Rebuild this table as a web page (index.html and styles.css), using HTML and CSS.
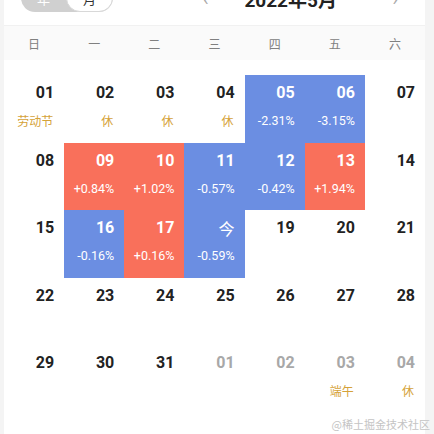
FILE: index.html
```html
<!DOCTYPE html>
<html lang="zh">
<head>
<meta charset="utf-8">
<link rel="stylesheet" href="styles.css">
</head>
<body>
<div class="page">
  <div class="card">
    <div class="toolbar">
      <div class="toggle">
        <span class="tg tg-year">年</span>
        <span class="tg tg-month">月</span>
      </div>
      <div class="nav">
        <span class="arrow">&lsaquo;</span>
        <span class="title">2022年5月</span>
        <span class="arrow">&rsaquo;</span>
      </div>
    </div>
    <div class="weekdays">
      <span>日</span><span>一</span><span>二</span><span>三</span><span>四</span><span>五</span><span>六</span>
    </div>
    <div class="grid">
      <div class="cell"><span class="num">01</span><span class="sub hol">劳动节</span></div>
      <div class="cell"><span class="num">02</span><span class="sub hol">休</span></div>
      <div class="cell"><span class="num">03</span><span class="sub hol">休</span></div>
      <div class="cell"><span class="num">04</span><span class="sub hol">休</span></div>
      <div class="cell down"><span class="num">05</span><span class="sub">-2.31%</span></div>
      <div class="cell down"><span class="num">06</span><span class="sub">-3.15%</span></div>
      <div class="cell"><span class="num">07</span></div>

      <div class="cell"><span class="num">08</span></div>
      <div class="cell up"><span class="num">09</span><span class="sub">+0.84%</span></div>
      <div class="cell up"><span class="num">10</span><span class="sub">+1.02%</span></div>
      <div class="cell down"><span class="num">11</span><span class="sub">-0.57%</span></div>
      <div class="cell down"><span class="num">12</span><span class="sub">-0.42%</span></div>
      <div class="cell up"><span class="num">13</span><span class="sub">+1.94%</span></div>
      <div class="cell"><span class="num">14</span></div>

      <div class="cell"><span class="num">15</span></div>
      <div class="cell down"><span class="num">16</span><span class="sub">-0.16%</span></div>
      <div class="cell up"><span class="num">17</span><span class="sub">+0.16%</span></div>
      <div class="cell down"><span class="num today">今</span><span class="sub">-0.59%</span></div>
      <div class="cell"><span class="num">19</span></div>
      <div class="cell"><span class="num">20</span></div>
      <div class="cell"><span class="num">21</span></div>

      <div class="cell"><span class="num">22</span></div>
      <div class="cell"><span class="num">23</span></div>
      <div class="cell"><span class="num">24</span></div>
      <div class="cell"><span class="num">25</span></div>
      <div class="cell"><span class="num">26</span></div>
      <div class="cell"><span class="num">27</span></div>
      <div class="cell"><span class="num">28</span></div>

      <div class="cell"><span class="num">29</span></div>
      <div class="cell"><span class="num">30</span></div>
      <div class="cell"><span class="num">31</span></div>
      <div class="cell other"><span class="num">01</span></div>
      <div class="cell other"><span class="num">02</span></div>
      <div class="cell other"><span class="num">03</span><span class="sub hol">端午</span></div>
      <div class="cell other"><span class="num">04</span><span class="sub hol">休</span></div>
    </div>
  </div>
  <div class="watermark">@稀土掘金技术社区</div>
</div>
</body>
</html>
```

FILE: styles.css
```css
html, body {
  margin: 0;
  padding: 0;
  background: #f4f4f4;
  overflow: hidden;
}

.page {
  position: relative;
  width: 434px;
  height: 434px;
  padding: 0 9px 0 4px;
  box-sizing: border-box;
  font-family: Roboto, "Noto Sans CJK SC", sans-serif;
  overflow: hidden;
}

.card {
  display: flow-root;
  background: #ffffff;
  height: 100%;
}

.toolbar {
  display: flex;
  align-items: center;
  height: 54px;
  margin-top: -29px;
  padding-left: 17px;
}

.toggle {
  display: flex;
  height: 28px;
  width: 92px;
  border-radius: 14px;
  background: #d0d0d0;
}

.tg {
  flex: 1;
  display: flex;
  align-items: center;
  justify-content: center;
  font-family: "Noto Sans CJK SC", sans-serif;
  font-size: 13px;
}

.tg-year {
  color: #ffffff;
}

.tg-month {
  background: #ffffff;
  border: 1px solid #d8d8d8;
  border-radius: 14px;
  color: #333333;
}

.nav {
  display: flex;
  align-items: center;
  margin-left: 90px;
  gap: 36px;
}

.arrow {
  color: #aaaaaa;
  font-size: 18px;
}

.title {
  font-family: Roboto, "Noto Sans CJK SC", sans-serif;
  font-weight: 700;
  font-size: 19px;
  color: #222222;
  width: 112px;
}

.weekdays {
  display: grid;
  grid-template-columns: repeat(7, 1fr);
  height: 34px;
  align-items: center;
  background: #fafafa;
  border-top: 1px solid #f1f1f1;
  font-family: "Noto Sans CJK SC", sans-serif;
  font-size: 12px;
  color: #808080;
  text-align: center;
}

.grid {
  display: grid;
  grid-template-columns: repeat(7, 1fr);
  grid-auto-rows: 67.6px;
  padding-top: 15px;
}

.cell {
  display: flex;
  flex-direction: column;
  align-items: flex-end;
  padding: 8px 10px 0 0;
}

.num {
  font-size: 16px;
  line-height: 20px;
  font-weight: 700;
  color: #222222;
}

.today {
  font-family: "Noto Sans CJK SC", sans-serif;
  font-weight: 400;
}

.sub {
  margin-top: 10px;
  font-size: 12.5px;
  line-height: 16px;
  color: #ffffff;
}

.hol {
  font-family: "Noto Sans CJK SC", sans-serif;
  font-size: 12px;
  color: #d5a238;
  margin-right: 1px;
}

.down {
  background: #6b8ee2;
}

.up {
  background: #f9705b;
}

.down .num,
.up .num {
  color: #ffffff;
}

.other .num {
  color: #a8a8a8;
}

.watermark {
  position: absolute;
  right: 4px;
  bottom: 2px;
  font-family: "Noto Sans CJK SC", sans-serif;
  font-size: 11px;
  color: #c4c4c4;
}
```
